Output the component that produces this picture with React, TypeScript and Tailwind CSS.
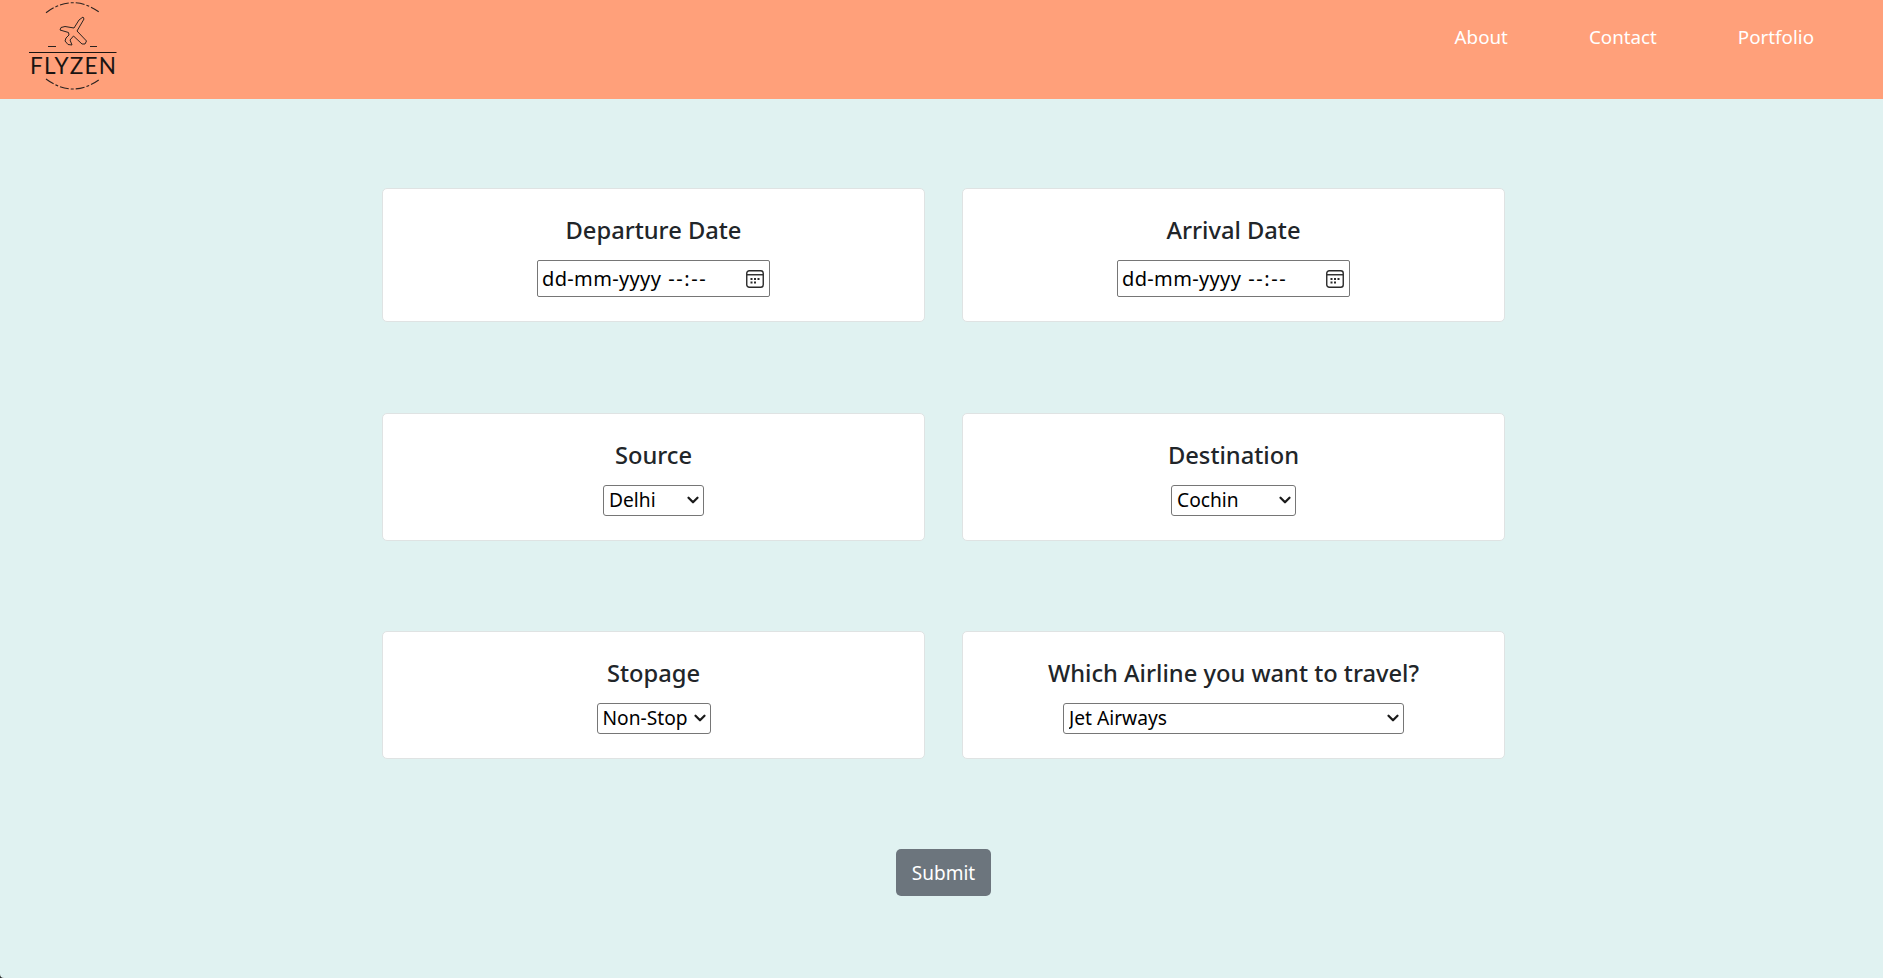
// Flight fare form page
import { ChevronDown } from "lucide-react";

const FONT = "font-['Noto_Sans','Open_Sans',sans-serif]";

function Logo() {
  return (
    <svg width="160" height="99" viewBox="0 0 160 99" className="shrink-0" fill="none">
      <path d="M46 12.7 Q73 -7.3 100 12.7" stroke="#2b2320" strokeWidth="1.1" strokeDasharray="9 2 3 2" />
      <path d="M46 79 Q73 99 100 79" stroke="#2b2320" strokeWidth="1.1" strokeDasharray="9 2 3 2" />
      <path
        d="M83 17 L84 19 L77 31 L86.5 41 L85 44 L82 44 L73.5 36 L70 40 L72 45 L68 44.5 L65 41 L66 38 L69 35 L68.5 32.5 L60 30 L61 27.5 L65 26.5 L74 28 L79 20 Z"
        stroke="#2b2320"
        strokeWidth="1"
        strokeLinejoin="round"
      />
      <path d="M48 46.5 H56 M90 46.5 H97" stroke="#2b2320" strokeWidth="1" />
      <path d="M29 52.5 H116.5" stroke="#1a1412" strokeWidth="1.2" />
      <text x="30" y="74" fontSize="22.5" fill="#1a1412" textLength="86" fontFamily="Lato, sans-serif">
        FLYZEN
      </text>
    </svg>
  );
}

function CalendarIcon() {
  return (
    <svg width="18" height="18" viewBox="0 0 18 18" fill="none" className="shrink-0">
      <rect x="0.75" y="0.75" width="16.5" height="16.5" rx="2.5" stroke="#2a2a2a" strokeWidth="1.4" />
      <path d="M1 4.75 H17" stroke="#2a2a2a" strokeWidth="1.4" />
      <path d="M4.5 8 h2 v2 h-2 z M8 8 h2 v2 h-2 z M11.5 8 h2 v2 h-2 z M4.5 11.5 h2 v2 h-2 z M8 11.5 h2 v2 h-2 z" fill="#2a2a2a" />
    </svg>
  );
}

function Card({ title, height, children }: { title: string; height: string; children: React.ReactNode }) {
  return (
    <div className={`flex flex-1 flex-col items-center rounded-[5px] border border-[#dfe3e3] bg-white pt-[27px] ${height}`}>
      <h4 className="text-[23.7px] font-medium leading-[29px] text-[#212529]">{title}</h4>
      {children}
    </div>
  );
}

function DateField() {
  return (
    <div className="mt-[15px] flex h-[37px] w-[233px] items-center justify-between rounded-[2px] border border-[#767676] bg-white pl-[4px] pr-[5px] text-[20px] text-black">
      <span className="flex gap-[7px] whitespace-pre">
        <span className="tracking-[0.35px]">dd-mm-yyyy</span>
        <span className="tracking-[1.6px]">--:--</span>
      </span>
      <CalendarIcon />
    </div>
  );
}

function Select({ options, width }: { options: string[]; width: string }) {
  return (
    <div className={`relative mt-[15px] h-[31px] ${width}`}>
      <select className="h-full w-full appearance-none rounded-[3px] border border-[#767676] bg-white pl-[5px] text-[19.2px] leading-normal text-black">
        {options.map((o) => (
          <option key={o}>{o}</option>
        ))}
      </select>
      <ChevronDown className="pointer-events-none absolute right-[2px] top-[6px] h-[18px] w-[18px] text-[#1a1a1a]" strokeWidth={3} />
    </div>
  );
}

export default function App() {
  return (
    <div className="bg-[#2a2a2a]">
      <div className={`flex h-[978px] flex-col rounded-bl-[4px] bg-[#e0f2f1] ${FONT}`}>
        <header className="flex h-[99px] items-start justify-between bg-[#ffa07a]">
          <Logo />
          <nav className="flex gap-[81px] pr-[69px] pt-[23px] text-[18.8px] leading-[28px] text-white">
            <a href="#">About</a>
            <a href="#">Contact</a>
            <a href="#">Portfolio</a>
          </nav>
        </header>
        <main className="ml-[382px] flex w-[1123px] flex-col pt-[89px]">
          <div className="flex gap-[37px]">
            <Card title="Departure Date" height="h-[134px]">
              <DateField />
            </Card>
            <Card title="Arrival Date" height="h-[134px]">
              <DateField />
            </Card>
          </div>
          <div className="mt-[91px] flex gap-[37px]">
            <Card title="Source" height="h-[128px]">
              <Select options={["Delhi", "Kolkata", "Mumbai", "Chennai"]} width="w-[101px]" />
            </Card>
            <Card title="Destination" height="h-[128px]">
              <Select options={["Cochin", "Delhi", "Hyderabad", "Kolkata"]} width="w-[125px]" />
            </Card>
          </div>
          <div className="mt-[90px] flex gap-[37px]">
            <Card title="Stopage" height="h-[128px]">
              <Select options={["Non-Stop", "1 Stop", "2 Stops"]} width="w-[114px]" />
            </Card>
            <Card title="Which Airline you want to travel?" height="h-[128px]">
              <Select options={["Jet Airways", "IndiGo", "Air India", "SpiceJet"]} width="w-[341px]" />
            </Card>
          </div>
          <div className="mt-[90px] flex justify-center">
            <button className="h-[47px] w-[95px] rounded-[5px] bg-[#6c757d] pt-[1px] text-[19px] text-white">Submit</button>
          </div>
        </main>
      </div>
    </div>
  );
}
